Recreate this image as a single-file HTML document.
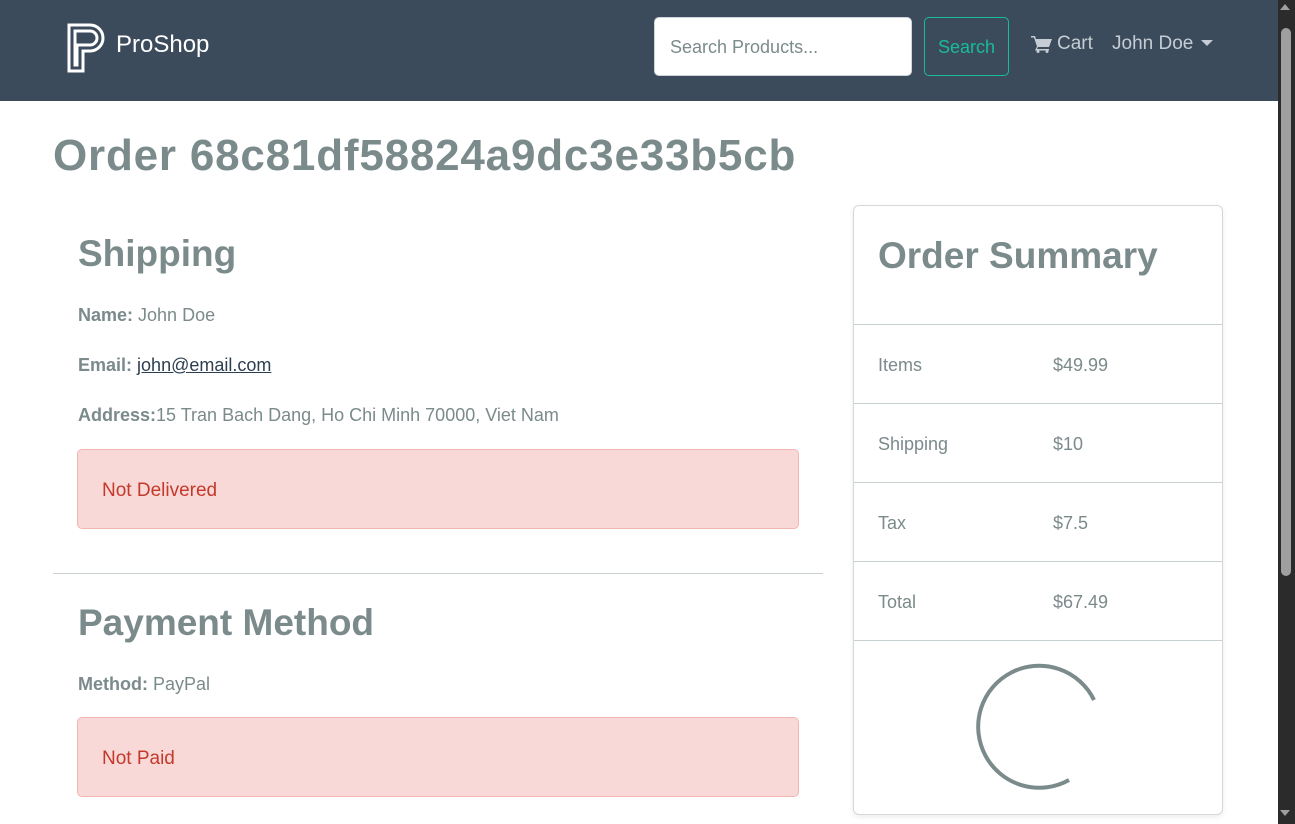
<!DOCTYPE html>
<html><head><style>
*{box-sizing:border-box;margin:0;padding:0}
body{width:1295px;height:824px;overflow:hidden;font-family:"Liberation Sans",sans-serif;background:#fff;color:#7b8a8b;position:relative}
.nav{position:absolute;left:0;top:0;width:1278px;height:101px;background:#3c4b5c}
.brand{position:absolute;left:116px;top:31px;color:#fff;font-size:24px}
.search{position:absolute;left:654px;top:17px;width:258px;height:59px;border:1px solid #ced4da;border-radius:5px;background:#fff;font-size:18px;color:#7b8a8b;padding:19px 15px}
.sbtn{position:absolute;left:924px;top:17px;width:85px;height:59px;border:1px solid #18bc9c;border-radius:5px;color:#18bc9c;font-size:18px;text-align:center;line-height:59px}
.navl{position:absolute;top:33px;color:#c5ccd3;font-size:19px}
.sb{position:absolute;left:1278px;top:0;width:17px;height:824px;background:#2b2b2b}
.thumb{position:absolute;left:1281px;top:28px;width:10px;height:548px;background:#9f9f9f;border-radius:5px}
h1{position:absolute;left:53px;top:131px;font-size:44px;font-weight:bold;color:#7b8a8b;letter-spacing:0.8px}
.h2{position:absolute;font-size:37px;font-weight:bold;color:#7b8a8b}
.p{position:absolute;left:78px;font-size:18px}
.alert{position:absolute;left:77px;width:722px;height:80px;background:#f9d9d7;border:1px solid #f3b5b1;border-radius:5px;color:#c3392b;font-size:19px;padding:30px 24px}
.card{position:absolute;left:853px;top:205px;width:370px;height:610px;border:1px solid #d3d8da;border-radius:6px;box-shadow:0 2px 6px rgba(0,0,0,.08)}
.row{position:absolute;left:0;width:368px;border-top:1px solid #c9d0d3;font-size:18px}
.row span{position:absolute;top:30px}
</style></head><body>
<div class="nav">
<svg style="position:absolute;left:66px;top:22px" width="40" height="52" viewBox="0 0 40 52" fill="none" stroke="#fff" stroke-width="3"><path d="M3 3H24A13 13 0 0 1 24 29H17V49H3Z"/><path d="M9 9H24A7 7 0 0 1 24 23H11V43H9Z"/></svg>
<div class="brand">ProShop</div>
<div class="search">Search Products...</div>
<div class="sbtn">Search</div>
<svg style="position:absolute;left:1031px;top:35px" width="21" height="18" viewBox="0 0 21 18" fill="#c5ccd3"><path d="M0 1h4l1 3h16l-3 8H7l-1 2h12v1.5H4l2-4L3 2.5H0z"/><circle cx="7" cy="16.5" r="1.5"/><circle cx="16" cy="16.5" r="1.5"/></svg>
<div class="navl" style="left:1057px">Cart</div>
<div class="navl" style="left:1112px">John Doe</div>
<div style="position:absolute;left:1201px;top:40px;border-left:6px solid transparent;border-right:6px solid transparent;border-top:6px solid #c5ccd3"></div>
</div>
<div class="sb"></div><div class="thumb"></div>
<div style="position:absolute;left:1280px;top:4px;border-left:5px solid transparent;border-right:5px solid transparent;border-bottom:6px solid #9f9f9f"></div>
<div style="position:absolute;left:1280px;top:810px;border-left:5px solid transparent;border-right:5px solid transparent;border-top:6px solid #9f9f9f"></div>
<h1>Order 68c81df58824a9dc3e33b5cb</h1>
<div class="h2" style="left:78px;top:233px">Shipping</div>
<div class="p" style="top:305px"><b>Name:</b> John Doe</div>
<div class="p" style="top:355px"><b>Email:</b> <u style="color:#2c3e50">john@email.com</u></div>
<div class="p" style="top:405px"><b>Address:</b>15 Tran Bach Dang, Ho Chi Minh 70000, Viet Nam</div>
<div class="alert" style="top:449px">Not Delivered</div>
<div style="position:absolute;left:53px;top:573px;width:770px;border-top:1px solid #c9d0d3"></div>
<div class="h2" style="left:78px;top:602px">Payment Method</div>
<div class="p" style="top:674px"><b>Method:</b> PayPal</div>
<div class="alert" style="top:717px">Not Paid</div>
<div class="card">
<div class="h2" style="left:24px;top:29px">Order Summary</div>
<div class="row" style="top:118px;height:79px"><span style="left:24px">Items</span><span style="left:199px">$49.99</span></div>
<div class="row" style="top:197px;height:79px"><span style="left:24px">Shipping</span><span style="left:199px">$10</span></div>
<div class="row" style="top:276px;height:79px"><span style="left:24px">Tax</span><span style="left:199px">$7.5</span></div>
<div class="row" style="top:355px;height:79px"><span style="left:24px">Total</span><span style="left:199px">$67.49</span></div>
<div class="row" style="top:434px;height:1px"></div>
<svg style="position:absolute;left:120px;top:457px" width="126" height="130" viewBox="0 0 126 130"><path d="M120 37A61 61 0 1 0 95 117" fill="none" stroke="#7b8a8b" stroke-width="4"/></svg>
</div>
</body></html>
